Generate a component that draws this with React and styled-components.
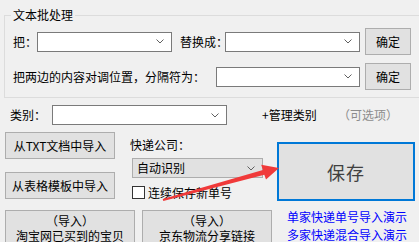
import React from "react";
import styled, { createGlobalStyle } from "styled-components";

const GlobalStyle = createGlobalStyle`
  html, body {
    margin: 0;
    padding: 0;
  }
  body {
    background: #f0f0f0;
    font-family: "Noto Sans CJK SC", "Microsoft YaHei", sans-serif;
    font-size: 12px;
    color: #000;
    overflow: hidden;
  }
`;

const Window = styled.div`
  position: relative;
  width: 419px;
  height: 242px;
  overflow: hidden;
  background: #f0f0f0;
`;

const GroupBox = styled.fieldset`
  margin: 7px 0 0 4px;
  padding: 5px 0 7px 8px;
  border: 1px solid #dcdcdc;
  border-right: none;
  min-width: 0;
`;

const GroupTitle = styled.legend`
  padding: 0 2px;
  margin-left: -2px;
  line-height: 16px;
`;

const Row = styled.div`
  display: flex;
  align-items: center;
  height: ${(p) => p.$h || 27}px;
  margin-top: ${(p) => p.$mt || 0}px;
  padding-left: ${(p) => p.$pl || 0}px;
`;

const Label = styled.span`
  flex: none;
  width: ${(p) => p.$w}px;
  margin-left: ${(p) => p.$ml || 0}px;
  white-space: nowrap;
  color: ${(p) => (p.$muted ? "#8c8c8c" : "#000")};
  line-height: 16px;
`;

const Combo = styled.div`
  box-sizing: border-box;
  flex: none;
  width: ${(p) => p.$w}px;
  height: 20px;
  display: flex;
  align-items: center;
  justify-content: space-between;
  padding: 0 7px 0 4px;
  border: 1px solid ${(p) => (p.$flat ? "#adadad" : "#7a7a7a")};
  background: ${(p) => (p.$flat ? "#e1e1e1" : "#fff")};
  line-height: 16px;
`;

const Button = styled.div`
  box-sizing: border-box;
  flex: none;
  width: ${(p) => p.$w}px;
  height: ${(p) => p.$h || 27}px;
  margin-left: ${(p) => p.$ml || 0}px;
  display: flex;
  align-items: center;
  justify-content: center;
  border: 1px solid #adadad;
  background: #e1e1e1;
  line-height: 16px;
  white-space: nowrap;
`;

const Section = styled.div`
  display: flex;
  align-items: flex-start;
  margin-top: 7px;
  padding-left: 5px;
`;

const LeftCol = styled.div`
  display: flex;
  flex-direction: column;
  gap: 13px;
  width: 110px;
`;

const MidCol = styled.div`
  display: flex;
  flex-direction: column;
  width: 131px;
  margin-left: 17px;
`;

const CourierLabel = styled.div`
  line-height: 16px;
  margin: 5px 0 5px -2px;
`;

const CheckRow = styled.label`
  display: flex;
  align-items: center;
  margin-top: 8px;
  height: 13px;
  line-height: 16px;
  white-space: nowrap;
`;

const CheckBox = styled.span`
  box-sizing: border-box;
  flex: none;
  width: 13px;
  height: 13px;
  border: 1px solid #333;
  background: #fff;
  margin-right: 3px;
`;

const SaveButton = styled.div`
  box-sizing: border-box;
  flex: none;
  width: 138px;
  height: 59px;
  margin: 10px 0 0 14px;
  display: flex;
  align-items: center;
  justify-content: center;
  border: 2px solid #0078d7;
  background: #e1e1e1;
  color: #404040;
  font-size: 18px;
  letter-spacing: 1px;
`;

const BottomRow = styled.div`
  display: flex;
  align-items: flex-start;
  gap: 7px;
  margin-top: 9px;
  padding-left: 5px;
`;

const ImportButton = styled.div`
  box-sizing: border-box;
  flex: none;
  width: 130px;
  height: 40px;
  padding-top: 2px;
  border: 1px solid #adadad;
  background: #e1e1e1;
  text-align: center;
  line-height: 15px;
  white-space: nowrap;
`;

const Links = styled.div`
  display: flex;
  flex-direction: column;
  margin: -2px 0 0 8px;
`;

const DemoLink = styled.a`
  color: #0000ff;
  text-decoration: none;
  line-height: 18px;
  white-space: nowrap;
`;

const Overlay = styled.svg`
  position: absolute;
  left: 0;
  top: 0;
  pointer-events: none;
`;

function Chevron() {
  return (
    <svg width="8" height="5" viewBox="0 0 8 5">
      <polyline points="0.5,0.5 4,4 7.5,0.5" fill="none" stroke="#606060" strokeWidth="1" />
    </svg>
  );
}

function Select({ w, flat, value }) {
  return (
    <Combo $w={w} $flat={flat}>
      <span>{value}</span>
      <Chevron />
    </Combo>
  );
}

export default function App() {
  return (
    <>
      <GlobalStyle />
      <Window>
        <GroupBox>
          <GroupTitle>文本批处理</GroupTitle>
          <Row>
            <Label $w={24}>把：</Label>
            <Select w={135} />
            <Label $w={45} $ml={8}>替换成：</Label>
            <Select w={135} />
            <Button $w={46} $ml={5}>确定</Button>
          </Row>
          <Row $mt={8}>
            <Label $w={203}>把两边的内容对调位置，分隔符为：</Label>
            <Select w={144} />
            <Button $w={46} $ml={5}>确定</Button>
          </Row>
        </GroupBox>

        <Row $h={20} $mt={7} $pl={10}>
          <Label $w={42}>类别：</Label>
          <Select w={175} />
          <Label $w={56} $ml={35}>+管理类别</Label>
          <Label $w={62} $ml={20} $muted>（可选项）</Label>
        </Row>

        <Section>
          <LeftCol>
            <Button $w={110}>从TXT文档中导入</Button>
            <Button $w={110}>从表格模板中导入</Button>
          </LeftCol>
          <MidCol>
            <CourierLabel>快递公司：</CourierLabel>
            <Select w={131} flat value="自动识别" />
            <CheckRow>
              <CheckBox />
              连续保存新单号
            </CheckRow>
          </MidCol>
          <SaveButton>保存</SaveButton>
        </Section>

        <BottomRow>
          <ImportButton>
            （导入）
            <br />
            淘宝网已买到的宝贝
          </ImportButton>
          <ImportButton>
            （导入）
            <br />
            京东物流分享链接
          </ImportButton>
          <Links>
            <DemoLink href="#">单家快递单号导入演示</DemoLink>
            <DemoLink href="#">多家快递混合导入演示</DemoLink>
          </Links>
        </BottomRow>

        <Overlay width="419" height="242" viewBox="0 0 419 242">
          <polygon
            points="162.7,199 262.9,169.9 261.2,164.8 279,168 266,179.6 264.3,174.7 163.3,201"
            fill="#f03a3a"
          />
        </Overlay>
      </Window>
    </>
  );
}
